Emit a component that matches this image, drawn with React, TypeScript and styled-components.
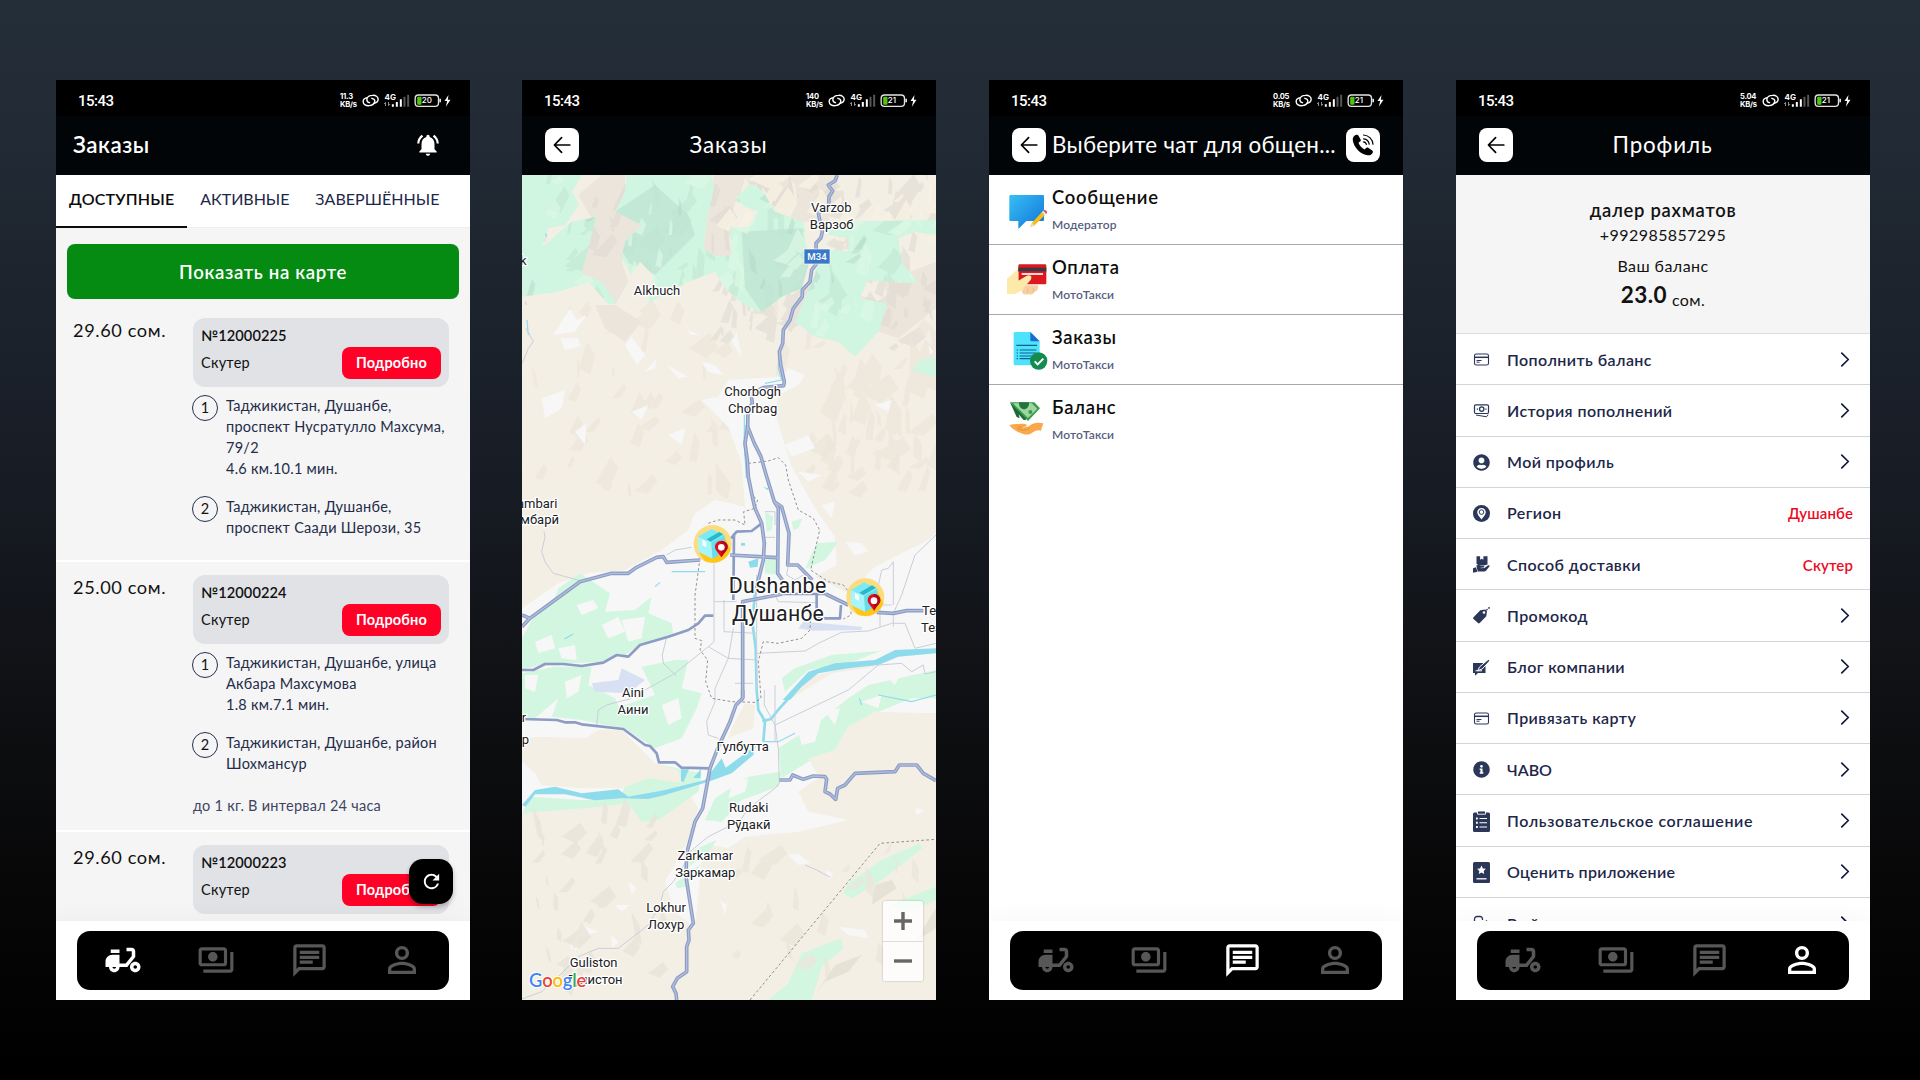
import React from 'react';
import styled, { createGlobalStyle, css } from 'styled-components';
import {
  MdDeliveryDining,
  MdOutlinePayments,
  MdOutlineChat,
  MdPersonOutline,
  MdNotificationsActive,
  MdRefresh,
} from 'react-icons/md';
import { FaUserCircle, FaInfoCircle } from 'react-icons/fa';

const Global = createGlobalStyle`
  * { box-sizing: border-box; }
  html, body { margin: 0; padding: 0; overflow: hidden; }
  body { font-family: Lato, "Noto Sans", sans-serif; color: #121212; }
`;

/* ---------- shell ---------- */

const Stage = styled.main`
  width: 1920px;
  height: 1080px;
  padding: 80px 0 0 56px;
  display: grid;
  grid-template-columns: 466px 467px 467px 414px;
  align-items: start;
  background: linear-gradient(180deg, #242e39 0%, #222b36 10%, #181d26 42%, #0f1013 65%, #050505 86%, #000 100%);
`;

const Phone = styled.section`
  width: 414px;
  height: 920px;
  display: flex;
  flex-direction: column;
  background: #fff;
  overflow: hidden;
`;

const StatusBar = styled.div`
  flex: none;
  height: 36px;
  padding: 5px 18px 0 22px;
  display: flex;
  align-items: center;
  background: #000;
  color: #fff;
`;

const Clock = styled.span`
  flex: 1;
  padding-top: 1px;
  font: 500 15px/18px Roboto, sans-serif;
  letter-spacing: -0.5px;
`;

const Speed = styled.span`
  display: flex;
  flex-direction: column;
  margin-right: 4px;
  width: 17px;
  font: 700 7.6px/7.3px Inter, sans-serif;
  letter-spacing: -0.25px;
  white-space: nowrap;
`;

const AppBar = styled.header`
  flex: none;
  position: relative;
  height: 59px;
  padding: 0 23px;
  display: flex;
  align-items: center;
  background: #020508;
  color: #fff;
`;

const HomeTitle = styled.h1`
  flex: 1;
  margin: 0 0 2px -6px;
  font-size: 22.4px;
  line-height: 28px;
  font-weight: 600;
  letter-spacing: 0.5px;
`;

const Bell = styled(MdNotificationsActive)`
  width: 26px;
  height: 26px;
  margin: 0 6px 1px 0;
`;

const ScreenTitle = styled.h1<{ $wide?: boolean }>`
  flex: 1;
  margin: 0 0 2px;
  font-size: 22.4px;
  line-height: 28px;
  font-weight: 400;
  white-space: nowrap;
  ${(p) =>
    p.$wide
      ? css`
          margin-left: 6px;
          letter-spacing: 0.25px;
        `
      : css`
          text-align: center;
          padding-right: 35px;
          letter-spacing: 0.85px;
        `}
`;

const SquareButton = styled.button`
  flex: none;
  width: 34px;
  height: 34px;
  margin-bottom: 1px;
  padding: 0;
  border: 0;
  border-radius: 8px;
  background: #fff;
  color: #000;
  display: flex;
  align-items: center;
  justify-content: center;
`;

const Body = styled.div<{ $tint?: string }>`
  flex: 1;
  min-height: 0;
  overflow: hidden;
  background: ${(p) => p.$tint ?? '#fff'};
`;

const NavDock = styled.footer`
  flex: none;
  position: relative;
  height: 79px;
  padding: 10px 21px 0;
  background: #fff;
  box-shadow: 0 -2px 26px rgba(0, 0, 0, 0.04);
`;

const NavPill = styled.nav`
  height: 58.5px;
  border-radius: 13px;
  background: #000;
  display: grid;
  grid-template-columns: repeat(4, 1fr);
  place-items: center;
`;

const NavItem = styled.span<{ $active: boolean; $size: number }>`
  display: flex;
  margin-right: 1px;
  color: ${(p) => (p.$active ? '#fff' : '#575757')};
  svg {
    width: ${(p) => p.$size}px;
    height: ${(p) => p.$size}px;
  }
`;

/* ---------- orders ---------- */

const Tabs = styled.div`
  flex: none;
  height: 53px;
  display: flex;
  background: #fff;
  border-bottom: 1px solid #efefef;
`;

const Tab = styled.span<{ $active?: boolean; $track: number }>`
  height: 53px;
  padding: 14px 13px 0;
  font-size: 16px;
  line-height: 20px;
  white-space: nowrap;
  letter-spacing: ${(p) => p.$track}px;
  color: ${(p) => (p.$active ? '#0c0c0c' : '#1d2749')};
  font-weight: ${(p) => (p.$active ? 600 : 400)};
  border-bottom: ${(p) => (p.$active ? '2px solid #0c0c0c' : '0')};
`;

const MapButton = styled.button`
  display: block;
  width: 392px;
  height: 55px;
  margin: 16px 11px 6px;
  border: 0;
  border-radius: 8px;
  background: #058a12;
  color: #fff;
  font: 600 18.6px/24px Lato, sans-serif;
  letter-spacing: 0.65px;
`;

const Order = styled.article`
  padding: 13px 21px 0 17px;
  display: grid;
  grid-template-columns: 120px 256px;
  border-bottom: 2px solid #fff;
`;

const Price = styled.span`
  margin-top: 1px;
  font-size: 18.2px;
  line-height: 22px;
  letter-spacing: 0.6px;
`;

const OrderCard = styled.div`
  height: 69px;
  padding: 9px 8px 8px;
  border-radius: 12px;
  background: #e1e2e6;
`;

const OrderNo = styled.div`
  font-size: 14.6px;
  line-height: 18px;
  font-weight: 600;
  letter-spacing: 0.1px;
`;

const OrderLine = styled.div`
  margin-top: 2px;
  display: flex;
  align-items: center;
  justify-content: space-between;
  font-size: 14.5px;
  letter-spacing: 0.25px;
`;

const Vehicle = styled.span`
  padding-bottom: 2px;
`;

const DetailsButton = styled.button`
  width: 99px;
  height: 32px;
  padding: 0 0 1px;
  border: 0;
  border-radius: 8px;
  background: #ff0026;
  color: #fff;
  font: 700 14.5px/18px Lato, sans-serif;
  letter-spacing: 0.2px;
`;

const Stops = styled.div`
  margin: 8px 0 22px -1px;
  display: flex;
  flex-direction: column;
  gap: 17px;
`;

const Stop = styled.div`
  display: flex;
  gap: 8px;
`;

const StopIndex = styled.span`
  flex: none;
  width: 26px;
  height: 26px;
  border: 1px solid #25304f;
  border-radius: 50%;
  font-size: 14.5px;
  line-height: 24px;
  text-align: center;
`;

const StopText = styled.span`
  font-size: 14.5px;
  line-height: 21px;
  letter-spacing: 0.26px;
  color: #242c49;
  white-space: pre;
`;

const Note = styled.div`
  margin: -1px 0 14px;
  font-size: 14.5px;
  line-height: 21px;
  letter-spacing: 0.26px;
  color: #3d4562;
`;

const Fab = styled.button`
  position: absolute;
  right: 17px;
  top: -62px;
  width: 44px;
  height: 45px;
  padding: 0;
  border: 0;
  border-radius: 14px;
  background: #000;
  color: #fff;
  display: flex;
  align-items: center;
  justify-content: center;
  box-shadow: 0 3px 5px rgba(0, 0, 0, 0.25);
  svg {
    width: 23px;
    height: 23px;
  }
`;

/* ---------- map ---------- */

const MapFrame = styled.div`
  position: relative;
  flex: 1;
  svg {
    display: block;
  }
`;

const ZoomControl = styled.div`
  position: absolute;
  right: 13px;
  bottom: 19px;
  width: 40px;
  height: 80px;
  border-radius: 2px;
  background: rgba(255, 255, 255, 0.8);
  box-shadow: 0 0 2px rgba(0, 0, 0, 0.3);
  display: flex;
  flex-direction: column;
  color: #666;
`;

const ZoomStep = styled.span`
  flex: 1;
  display: flex;
  align-items: center;
  justify-content: center;
  & + & {
    border-top: 1px solid #dcdcd8;
  }
`;

/* ---------- chats ---------- */

const ChatRow = styled.article`
  height: 70px;
  padding: 0 18px;
  display: flex;
  gap: 5px;
  border-bottom: 1px solid #a9a9a9;
  &:last-child {
    border-bottom: 0;
  }
`;

const ChatIcon = styled.span`
  width: 40px;
  padding-top: 17px;
  svg {
    display: block;
    overflow: visible;
  }
`;

const ChatTitle = styled.div`
  margin-top: 10px;
  font-size: 18.4px;
  line-height: 24px;
  font-weight: 600;
  letter-spacing: 0.7px;
  color: #0d0d0d;
`;

const ChatSub = styled.div`
  margin-top: 8px;
  font-size: 12px;
  line-height: 16px;
  font-weight: 600;
  letter-spacing: 0.1px;
  color: #566080;
`;

/* ---------- profile ---------- */

const ProfileHead = styled.div`
  height: 159px;
  padding-top: 23px;
  display: flex;
  flex-direction: column;
  align-items: center;
  background: #f5f5f5;
  border-bottom: 1px solid #dcdde2;
`;

const Name = styled.div`
  font-size: 18.4px;
  line-height: 24px;
  font-weight: 600;
  letter-spacing: 0.75px;
`;

const ProfileLine = styled.div<{ $top: number }>`
  margin-top: ${(p) => p.$top}px;
  font-size: 16px;
  line-height: 20px;
  letter-spacing: 0.45px;
`;

const Balance = styled.div`
  margin-top: 5px;
  display: flex;
  gap: 5px;
  font-size: 22.5px;
  line-height: 28px;
  font-weight: 700;
  letter-spacing: 0.4px;
  small {
    padding-top: 5px;
    font-size: 16px;
    font-weight: 400;
  }
`;

const MenuRow = styled.div`
  height: 51.27px;
  padding: 0 17px;
  display: flex;
  align-items: center;
  border-bottom: 1px solid #d3d4db;
  color: #1d2749;
`;

const MenuIcon = styled.span`
  width: 17px;
  margin-right: 17px;
  padding-top: 1px;
  display: flex;
  align-items: center;
  color: #2b3759;
`;

const MenuLabel = styled.span<{ $track: number }>`
  flex: 1;
  padding-top: 1px;
  font-size: 16px;
  line-height: 20px;
  font-weight: 600;
  letter-spacing: ${(p) => p.$track}px;
`;

const MenuValue = styled.span`
  padding-top: 1px;
  font-size: 15px;
  line-height: 20px;
  font-weight: 600;
  letter-spacing: 0.1px;
  color: #ec0a22;
`;

const Chevron = styled.svg`
  margin-right: 3px;
`;

/* ---------- shared pieces ---------- */

const StatusIcons = ({ level }: { level: string }) => (
  <svg width="91" height="15" viewBox="932 55 272 45" fill="none">
    <g stroke="#fff" strokeWidth="4.2" strokeLinecap="round">
      <path d="M951 69c-8 1-13 6-13 12 0 8 9 13 18 12 9 0 17-6 17-13 0-5-4-8-9-9" />
      <path d="M969 86c8-1 14-6 14-12 0-8-8-13-17-12-10 0-17 6-17 13 0 5 4 8 8 9" />
    </g>
    <text x="1002" y="75" fill="#fff" fontFamily="Inter, sans-serif" fontWeight="700" fontSize="24">4G</text>
    <path d="M1005 94V83l-4 5M1014 82v11l4-5" stroke="#8c8c8c" strokeWidth="3" />
    <path d="M1027 96v-7M1039 96V82M1051 96V74" stroke="#fff" strokeWidth="6" />
    <path d="M1062 96V66M1073 96V60" stroke="#565656" strokeWidth="6" />
    <rect x="1094" y="61" width="70" height="34" rx="10" stroke="#e4e4e4" strokeWidth="4" />
    <path d="M1169 72v11" stroke="#e4e4e4" strokeWidth="5" />
    <rect x="1100" y="66" width="13" height="24" rx="3" fill="#53c310" />
    <text x="1114" y="86" fill="#fff" fontFamily="Inter, sans-serif" fontWeight="500" fontSize="24">{level}</text>
    <path d="M1194 61l-12 18h8l-4 17 14-21h-8z" fill="#fff" />
  </svg>
);

const Status = ({ speed, level }: { speed: string; level: string }) => (
  <StatusBar>
    <Clock>15:43</Clock>
    <Speed>
      <span>{speed}</span>
      <span>KB/s</span>
    </Speed>
    <StatusIcons level={level} />
  </StatusBar>
);

const BackButton = () => (
  <SquareButton>
    <svg width="18" height="18" viewBox="0 0 18 18" fill="none" stroke="#000" strokeWidth="1.7" strokeLinecap="round" strokeLinejoin="round">
      <path d="M16.8 9H1.6M8.6 1.6L1.4 9l7.2 7.4" />
    </svg>
  </SquareButton>
);

const navIcons: [React.ReactElement, number][] = [
  [<MdDeliveryDining />, 42],
  [<MdOutlinePayments />, 38],
  [<MdOutlineChat />, 39],
  [<MdPersonOutline />, 42],
];

const Nav = ({ active, children }: { active: number; children?: React.ReactNode }) => (
  <NavDock>
    {children}
    <NavPill>
      {navIcons.map(([icon, size], i) => (
        <NavItem key={i} $active={i === active} $size={size}>
          {icon}
        </NavItem>
      ))}
    </NavPill>
  </NavDock>
);

/* ---------- screens ---------- */

type OrderData = { price: string; no: string; stops: string[]; note?: string };

const orders: OrderData[] = [
  {
    price: '29.60 сом.',
    no: '№12000225',
    stops: [
      'Таджикистан, Душанбе,\nпроспект Нусратулло Махсума,\n79/2\n4.6 км.10.1 мин.',
      'Таджикистан, Душанбе,\nпроспект Саади Шерози, 35',
    ],
  },
  {
    price: '25.00 сом.',
    no: '№12000224',
    stops: ['Таджикистан, Душанбе, улица\nАкбара Махсумова\n1.8 км.7.1 мин.', 'Таджикистан, Душанбе, район\nШохмансур'],
    note: 'до 1 кг. В интервал 24 часа',
  },
  { price: '29.60 сом.', no: '№12000223', stops: [] },
];

const OrdersScreen = () => (
  <Phone>
    <Status speed="11.3" level="20" />
    <AppBar>
      <HomeTitle>Заказы</HomeTitle>
      <Bell />
    </AppBar>
    <Tabs>
      <Tab $active $track={0.2}>ДОСТУПНЫЕ</Tab>
      <Tab $track={-0.05}>АКТИВНЫЕ</Tab>
      <Tab $track={0.05}>ЗАВЕРШЁННЫЕ</Tab>
    </Tabs>
    <Body $tint="#f5f5f5">
      <MapButton>Показать на карте</MapButton>
      {orders.map((o) => (
        <Order key={o.no}>
          <Price>{o.price}</Price>
          <div>
            <OrderCard>
              <OrderNo>{o.no}</OrderNo>
              <OrderLine>
                <Vehicle>Скутер</Vehicle>
                <DetailsButton>Подробно</DetailsButton>
              </OrderLine>
            </OrderCard>
            <Stops>
              {o.stops.map((s, i) => (
                <Stop key={s}>
                  <StopIndex>{i + 1}</StopIndex>
                  <StopText>{s}</StopText>
                </Stop>
              ))}
            </Stops>
            {o.note && <Note>{o.note}</Note>}
          </div>
        </Order>
      ))}
    </Body>
    <Nav active={0}>
      <Fab>
        <MdRefresh />
      </Fab>
    </Nav>
  </Phone>
);

/* Map drawing: artboard units are a third of a pixel. */

const seeded = (seed: number) => () => {
  seed = (seed * 1664525 + 1013904223) % 4294967296;
  return seed / 4294967296;
};

const facets = (seed: number, n: number, box: [number, number, number, number], size: number) => {
  const r = seeded(seed);
  const out: string[] = [];
  for (let i = 0; i < n; i++) {
    const x = box[0] + r() * box[2];
    const y = box[1] + r() * box[3];
    const a = r() * 1.3 + 0.5;
    const l = size * (0.5 + r());
    const w = l * (0.15 + r() * 0.35);
    const dx = Math.cos(a) * l;
    const dy = -Math.sin(a) * l;
    out.push(
      `M${x.toFixed(0)} ${y.toFixed(0)}l${dx.toFixed(0)} ${dy.toFixed(0)}l${(w * 0.7).toFixed(0)} ${(w * 1.1).toFixed(0)}l${(-dx * 0.55).toFixed(0)} ${(-dy * 0.75).toFixed(0)}z`,
    );
  }
  return out.join('');
};

const forest =
  'M21 300H200L172 350 192 390 150 450 100 460 80 515 21 512zM21 515L90 510 170 440 245 425 230 480 200 595 260 620 303 685 280 688 222 622 130 650 21 665zM335 300H590L597 340 577 430 565 520 600 545 650 540 645 460 700 455 730 410 690 395 660 370 710 325 745 350 780 410 865 440 880 570 860 640 800 665 740 712 690 690 635 645 600 590 520 620 400 685 415 600 375 560 350 600 320 550 330 500 380 450 300 410 330 350zM940 440L1263 435V480L1200 470 1150 490 1160 560 1210 625 1130 622 1060 615 1033 670 1117 685 1090 770 1020 845 970 800 900 785 840 740 865 680 900 600 910 520 1000 530 1000 490 940 480zM1190 885L1220 852 1263 850V905z';

const highways = [
  'M967 300L960 318 940 330 953 348 942 365 941 388 910 415 922 470 918 488 903 505 905 565 890 585 885 620 862 645 862 665 835 700 825 735 805 765 803 805 793 830 797 870 808 920 806 932 745 938 708 955 712 985 699 1005 698 1055 690 1105 697 1155 700 1205 712 1265 720 1300 740 1345 748 1405 745 1455 730 1515 720 1555',
  'M698 1055L718 1105 738 1145 752 1195 778 1280 790 1300 788 1495 802 1515',
  'M778 1280L800 1295 822 1375 818 1470 848 1470 892 1515',
  'M21 1620L45 1630 195 1520 290 1495 340 1495 365 1477 425 1447 445 1445 455 1462 555 1455M21 1655L45 1630',
  'M645 1440L785 1448M932 1557L1000 1590M1085 1612L1135 1615 1175 1607 1225 1607',
  'M683 1870V1580L770 1563 802 1557',
  'M683 1845V1870L663 1890 645 1940 610 2015 585 2080 563 2200 540 2240 515 2335 513 2405 535 2545 520 2565 522 2595 515 2615 515 2690 487 2710 473 2735 483 2755 485 2775',
  'M793 2115L825 2115 833 2100 865 2113 895 2103 930 2105 935 2113 930 2150 945 2157 962 2173 968 2140 990 2130 1020 2095 1140 2090 1153 2070 1205 2070 1225 2095 1263 2117',
];

const arterials = [
  'M648 1390L665 1370 710 1368 740 1345M657 1375L655 1575',
  'M905 1555V1630H975L978 1590M802 1557H932',
  'M21 1785L55 1785 90 1767 145 1767 200 1773 265 1763 305 1740 340 1745 375 1710 460 1685 520 1665 550 1645 570 1622 595 1622',
  'M21 1932L125 1935 150 1942 180 1942 200 1948 325 1962 390 2010 405 2013 425 2035 432 2062 480 2062 500 2078 585 2080',
];

const lanes =
  'M597 1465V1700L580 1715 480 1795 390 1845M455 1685L442 1740 445 1765 485 1803M580 1715L640 1750 725 1755M597 1580H665M627 1575V1670L725 1675M725 1500V1845M655 1660L640 1750 600 1840V1880L575 1940 580 1980 610 1990M725 1735L870 1728 910 1705 980 1672 1060 1668 1130 1645 1170 1645 1200 1720 1263 1705M1135 1610V1655M1095 1655V1590H1130M1135 1615L1160 1560 1200 1440 1263 1380M1085 1555L1100 1485 1120 1480 1135 1460V1590M820 1470L815 1500 840 1515 865 1500M780 1350V1310H750M750 1387H780M455 1440L480 1425 530 1417M780 1560L790 1580 905 1583M748 1845V1890L780 1950 1000 1845 1090 1770 1160 1765 1190 1790 1225 1770 1230 1797 1263 1790M780 1950L790 2020 793 2125 780 2140 700 2200 680 2230 630 2260 580 2285 525 2330M780 1830V2000M245 1950L250 1905 275 1890 350 1870M513 2360L475 2420 445 2450 435 2490 400 2550 310 2620H250L190 2645 130 2705 80 2750 21 2772M87 1370L90 1385 80 1430 90 1460 115 1495 195 1517M30 680L35 690M33 760L55 800 40 820 22 865M660 1825H715M870 2370L905 2385 945 2407';

const labels: [number, number, string][] = [
  [949, 411, 'Varzob'],
  [950, 461, 'Варзоб'],
  [426, 659, 'Alkhuch'],
  [713, 963, 'Chorbogh'],
  [713, 1014, 'Chorbag'],
  [354, 1865, 'Aini'],
  [354, 1916, 'Аини'],
  [683, 2028, 'Гулбутта'],
  [701, 2210, 'Rudaki'],
  [701, 2261, 'Рӯдакӣ'],
  [571, 2355, 'Zarkamar'],
  [571, 2406, 'Заркамар'],
  [453, 2511, 'Lokhur'],
  [453, 2562, 'Лохур'],
  [236, 2677, 'Guliston'],
];

const Marker = ({ x, y }: { x: number; y: number }) => (
  <g transform={`translate(${x} ${y})`}>
    <circle r="57" fill="#fbdd80" />
    <path d="M-42 24L-24 51A57 57 0 0 0 54 18L36 -20z" fill="#ffc51b" />
    <path d="M-44 -22L-4 -5 0 44 -42 24z" fill="#a6f5fb" />
    <path d="M-4 -5L36 -26 36 22 0 44z" fill="#62dff1" />
    <path d="M-44 -22L-4 -45 36 -26 -4 -5z" fill="#7beaf6" />
    <path d="M-18 -14L20 -36 32 -29 -6 -7z" fill="#27b9c9" />
    <path d="M-31 -13L-19 -7V10L-31 4z" fill="#f3feff" />
    <path d="M26 40C14 22 7 18 7 9a19 19 0 0 1 38 0c0 9-7 13-19 31z" fill="#e30b1c" />
    <path d="M26 40C38 22 45 18 45 9A19 19 0 0 0 26 -10z" fill="#b40818" />
    <circle cx="26" cy="10" r="10" fill="#fff" />
  </g>
);

const CityMap = () => (
  <svg width="414" height="825" viewBox="21 300 1242 2475">
    <defs>
      <clipPath id="forest"><path d={forest} /></clipPath>
    </defs>
    <rect x="21" y="300" width="1242" height="2475" fill="#f4efe5" />
    <path d="M190 360L260 300 330 300 330 360 300 410 380 450 330 500 320 560 340 620 300 690 250 620 200 595 235 440zM597 300H967L940 440 865 440 780 410 660 380 640 460 650 540 600 545 565 520zM21 450L80 460 95 500 21 515zM240 690L300 690 380 740 330 800 270 760zM1030 660L1117 685 1110 620 1263 560V700L1150 790 1090 770z" fill="#ebe5dc" />
    <g fill="#ded8d0" opacity=".5">
      <path d={facets(7, 60, [200, 310, 1060, 260], 60)} />
      <path d={facets(19, 34, [560, 640, 380, 160], 50)} />
      <path d={facets(23, 26, [1020, 560, 240, 260], 55)} />
    </g>
    <path d={facets(31, 38, [600, 300, 663, 200], 60)} fill="#f7f1e3" opacity=".8" />
    <path d={facets(41, 70, [30, 700, 1230, 560], 60)} fill="#ebe6da" opacity=".7" />
    <path d={facets(43, 46, [900, 880, 360, 340], 75)} fill="#ebe6da" opacity=".7" />

    <path d={forest} fill="#d0f5e0" />
    <g clipPath="url(#forest)">
      <path d="M300 410L420 330 520 420 540 480 420 600 330 560zM680 470L860 460 900 640 740 712 690 640z" fill="#c4e8d6" />
      <path d={facets(3, 70, [20, 310, 1243, 500], 65)} fill="#bfe3d1" opacity=".55" />
      <path d={facets(11, 80, [20, 320, 1243, 520], 60)} fill="#dcf9e4" opacity=".7" />
      <path d={facets(13, 26, [20, 320, 1243, 460], 45)} fill="#a9d2bf" opacity=".35" />
    </g>

    <path d="M640 915L800 905 820 880 870 900 850 930 790 960 780 1010 800 1080 830 1175 900 1300 960 1385 965 1470 900 1505 1000 1555 1080 1475 1240 1395 1263 1375V1915L1080 1915 1000 1955 960 2025 930 2095 850 2150 880 2210 1000 2235 850 2270 690 2285 640 2320 590 2310 560 2360 540 2560 480 2510 450 2420 515 2305 550 2200 510 2135 340 2175 200 2195 21 2215V1600L130 1525 220 1495 330 1485 440 1425 520 1365 540 1315 600 1275 690 1295 680 1165 640 1055 560 975 610 965z" fill="#f7f7f7" />
    <path d="M115 780L165 700 185 735 215 720 180 770zM135 790L190 790 195 815 150 825zM330 810L350 785 390 840 365 870zM500 720L520 765 555 780 525 780zM390 890L425 850 420 880zM455 870L520 905 490 910zM650 800L665 770 680 845zM560 860L600 870 625 900 580 890zM80 970L150 945 140 1000 90 1030zM180 1070L215 1045 210 1110zM1240 810L1255 830 1245 840zM1080 990L1130 975 1120 1010zM350 1010L400 990 380 1035zM460 1080L510 1060 500 1110zM810 1110L880 1080 900 1120 830 1145zM850 1190L920 1200 880 1220zM990 1400L1040 1405 1060 1430 1020 1440zM920 1290L960 1280 950 1330zM165 2620L200 2550 250 2570 190 2590 185 2625zM340 2420L365 2440 350 2460zM300 2490L345 2490 320 2510zM615 2475L635 2490 630 2520zM820 2340L850 2335 885 2365 850 2370zM970 2555L1050 2565 1060 2590 1000 2580zM1200 2200L1230 2205 1205 2220zM930 2385L955 2395 940 2415zM290 2580L310 2600 290 2620z" fill="#f7f7f7" />

    <path d="M130 1540L195 1495 225 1515 285 1555 270 1610 360 1605 410 1565 400 1615 470 1645 475 1685 380 1705 330 1740 300 1735 270 1760 160 1765 90 1765 21 1785V1690L50 1635 120 1565zM21 1795L120 1775 230 1775 220 1830 300 1870 340 1960 270 1950 200 1935 110 1925 130 1870 60 1930 21 1925zM380 1775L480 1755 520 1755 500 1840 560 1855 545 1900 500 1990 420 2020 330 1960 300 1900 420 1860zM1263 1785V1870L1190 1870 1080 1915 1000 1955 960 2025 880 2060 800 2110 790 2020 900 1950 1000 1870 1060 1830zM800 1810L840 1780 950 1740 1100 1727 1000 1765 880 1785 810 1850zM750 1310L775 1325 770 1365 755 1370zM830 1340L862 1330 850 1360 835 1365zM905 1405L970 1400 930 1455 870 1482zM750 1455L792 1445V1500L750 1495zM330 2120L380 2090 440 2070 560 2095 550 2150 430 2235 380 2240 340 2185 210 2200 21 2215 50 2165 200 2175 320 2170zM570 2235L600 2170 700 2105 800 2090 790 2135 680 2175 620 2240zM985 2455L1000 2425 1100 2355 1215 2305 1222 2320 1100 2415 1010 2470zM860 2635L980 2590 985 2620 920 2675 890 2775 760 2775 820 2725zM1120 2490L1263 2435V2475L1180 2510zM535 2325L605 2295 580 2335 520 2375zM480 2425L560 2365 510 2435 487 2440z" fill="#d3f6e0" />
    <path d="M60 1700L110 1680 120 1720 70 1735zM185 1590L235 1575 250 1600 200 1620zM260 1650L310 1625 330 1670 280 1690zM130 1720L180 1710 185 1755 140 1750zM320 1635L390 1625 380 1690 340 1700zM30 1800L70 1800 60 1850 30 1840zM150 1820L200 1800 190 1850 155 1870zM440 1890L490 1870 500 1930 460 1950zM850 1970L920 1930 900 2000 860 2010zM1040 1880L1100 1860 1090 1900zM650 2130L700 2110 690 2150 640 2170zM930 1910L975 1900 960 1950zM1110 1800L1160 1790 1140 1830z" fill="#f7f7f7" />
    <path d="M21 1995L60 1985 230 1990 130 2040 60 2095 21 2060zM250 1965L320 1965 420 2065 490 2085 500 2125 400 2110 320 2140 200 2140 80 2130 60 2095 130 2040zM650 1960L690 1885 720 1890 715 1960 640 1990zM880 2050L960 2025 1000 1955 1080 1910 1263 1915V2120L1000 2200 930 2140zM905 1800L1090 1755 1080 1775 950 1795 830 1870 860 1830z" fill="#f4efe5" />
    <path d={facets(53, 34, [30, 2240, 430, 520], 62)} fill="#e9e4d8" opacity=".8" />
    <path d={facets(59, 22, [640, 2330, 600, 420], 55)} fill="#ebe6da" opacity=".8" />
    <path d="M900 2760L960 2670 1040 2640 1000 2690 930 2720zM1200 2600L1263 2500V2560zM1080 2430L1130 2415 1145 2440 1070 2490z" fill="#e3ded2" opacity=".8" />

    <path d="M850 1660L865 1640 1040 1655V1665L890 1667zM230 1825L310 1815 320 1780 390 1815 340 1855 240 1850z" fill="#d8e0f4" />
    <g fill="#8edbec">
      <path d="M803 1875L880 1790 960 1765 1080 1755 1140 1725 1263 1720V1735L1150 1745 1090 1770 1000 1780 910 1795 860 1835 825 1875zM21 2190L60 2145 120 2135 200 2155 310 2143 340 2165 450 2145 570 2115 620 2050 632 2078 722 2012 715 2040 650 2095 580 2120 450 2160 400 2172 320 2170 240 2176 150 2158 60 2158 32 2195zM498 2083L522 2083 505 2122 498 2118zM535 2108L558 2082 556 2110zM700 1460L730 1450 728 1475 705 1478zM678 1404H690V1412H678zM745 1236L760 1240 758 1246zM90 475L96 478 94 492z" />
    </g>
    <g stroke="#8edbec" fill="none">
      <path d="M720 1555L712 1640 722 1720 725 1845 730 1905 750 1938 745 2000" strokeWidth="8" />
      <path d="M836 1853L785 1910 768 1932 742 1938" strokeWidth="8" />
      <path d="M792 840L790 880 800 915 750 925M688 1020V1105L694 1210M745 2000L790 2000 840 1975M1090 1860L1190 1880 1263 1860M36 735L40 780M420 1535L435 1522M470 1490L570 1490M148 1692L175 1677M1033 1870L1040 1890" strokeWidth="3.5" />
      <path d="M690 1050L688 1110 697 1200 716 1290 740 1350" strokeWidth="5" />
    </g>

    <path d={lanes} fill="none" stroke="#c9cfda" strokeWidth="3" />
    <g fill="none" stroke="#7c7c7c" strokeWidth="2.5" strokeDasharray="8 7">
      <path d="M700 1165L760 1158 790 1148 812 1170 820 1215 850 1305 895 1330 914 1365 887 1485 940 1520 985 1530 1008 1560 1008 1620 985 1632M555 1450L540 1560V1690L560 1697 555 1725 578 1755 572 1820 590 1870 650 1880 720 1882 738 1870 730 1760 745 1700 790 1705 860 1690 885 1665 887 1620M580 1345L610 1335 660 1335 690 1350 686 1310 720 1300 728 1275 700 1250M705 2775L1095 2305 1263 2293" />
    </g>
    <g fill="none" stroke="#8c9cc4" strokeLinejoin="round">
      {arterials.map((d) => <path key={d} d={d} strokeWidth="8" />)}
      {highways.map((d) => <path key={d} d={d} strokeWidth="11" />)}
    </g>
    <g fill="none" stroke="#b1bedb" strokeWidth="4" strokeLinejoin="round">
      {highways.map((d) => <path key={d} d={d} />)}
    </g>

    <rect x="867" y="522" width="78" height="45" fill="#3a78c8" stroke="#fff" strokeWidth="2" />
    <text x="906" y="555" fill="#fff" fontFamily="Roboto, sans-serif" fontWeight="500" fontSize="29" textAnchor="middle">M34</text>

    <Marker x={593} y={1407} />
    <Marker x={1051} y={1567} />

    <g fontFamily="Roboto, sans-serif" fill="#202124" stroke="#fff" strokeWidth="8" strokeLinejoin="round" paintOrder="stroke" fontSize="39">
      <g textAnchor="middle">
        {labels.map(([x, y, t]) => <text key={t} x={x} y={y}>{t}</text>)}
        <text x="788" y="1554" fontSize="64" letterSpacing="1">Dushanbe</text>
        <text x="789" y="1639" fontSize="64" letterSpacing="0.6">Душанбе</text>
      </g>
      <text x="158" y="2728">Гулистон</text>
      <text x="15" y="571">k</text>
      <text x="127" y="1298" textAnchor="end">ambari</text>
      <text x="132" y="1348" textAnchor="end">мбарӣ</text>
      <text x="1221" y="1620">Tez</text>
      <text x="1218" y="1671">Тез</text>
      <text x="20" y="2008">р</text>
      <text x="20" y="1940">r</text>
    </g>
    <text x="42" y="2736" fontFamily="Lato, sans-serif" fontWeight="600" fontSize="55" textLength="172" stroke="#fff" strokeWidth="6" paintOrder="stroke">
      <tspan fill="#4285f4">G</tspan>
      <tspan fill="#ea4335">o</tspan>
      <tspan fill="#fbbc05">o</tspan>
      <tspan fill="#4285f4">g</tspan>
      <tspan fill="#34a853">l</tspan>
      <tspan fill="#ea4335">e</tspan>
    </text>
  </svg>
);

const MapScreen = () => (
  <Phone>
    <Status speed="140" level="21" />
    <AppBar>
      <BackButton />
      <ScreenTitle>Заказы</ScreenTitle>
    </AppBar>
    <MapFrame>
      <CityMap />
      <ZoomControl>
        <ZoomStep>
          <svg width="18" height="18" viewBox="0 0 18 18"><path d="M0 9h18M9 0v18" stroke="currentColor" strokeWidth="3.4" /></svg>
        </ZoomStep>
        <ZoomStep>
          <svg width="18" height="18" viewBox="0 0 18 18"><path d="M0 9h18" stroke="currentColor" strokeWidth="3.4" /></svg>
        </ZoomStep>
      </ZoomControl>
    </MapFrame>
  </Phone>
);

const MessageArt = () => (
  <svg width="40" height="40" viewBox="0 0 120 120">
    <defs>
      <linearGradient id="bubble" x1="0" y1="0" x2="1" y2="1">
        <stop offset="0" stopColor="#36c0f4" />
        <stop offset="1" stopColor="#1273d8" />
      </linearGradient>
    </defs>
    <path d="M7 12a3 3 0 0 1 3-3h98a3 3 0 0 1 3 3v72a3 3 0 0 1-3 3H58L34 111V87H10a3 3 0 0 1-3-3z" fill="url(#bubble)" />
    <path d="M75 92L105 60l9 9-31 31-13 5z" fill="#f5bd16" />
    <path d="M75 92l8 8-13 5z" fill="#e8d9b4" />
    <path d="M104 61l6-6 9 9-6 6z" fill="#dfe3e6" />
    <path d="M110 55c4-4 12 3 10 8l-2 2-9-9z" fill="#e0475f" />
  </svg>
);

const PaymentArt = () => (
  <svg width="40" height="40" viewBox="0 0 120 120">
    <path d="M45 70h48c1 14-3 18-11 20-4 9-14 9-18 5-6 5-17 3-19-5z" fill="#f7cfa0" />
    <path d="M62 80v14M79 78v13" stroke="#e3b27e" strokeWidth="2" />
    <path d="M0 50L34 20v60h20L26 94c-5 3-12 2-26 2z" fill="#fde9a9" />
    <rect x="34" y="7" width="84" height="60" rx="4" fill="#dc1a1e" />
    <path d="M34 17h84v11H34z" fill="#3c3846" />
    <path d="M44 36h64" stroke="#fff" strokeWidth="5" />
    <path d="M0 52L34 30v26l24-14c8-5 16-2 15 6-1 8-10 14-18 24-10 12-22 22-32 23-8 1-14 1-23 1z" fill="#fde9a9" />
  </svg>
);

const OrdersArt = () => (
  <svg width="40" height="40" viewBox="0 0 120 120">
    <path d="M20 4a4 4 0 0 1 4-4h46l28 28v68a4 4 0 0 1-4 4H24a4 4 0 0 1-4-4z" fill="#4fe3fb" />
    <path d="M70 0l28 28H74a4 4 0 0 1-4-4z" fill="#1a6bd3" />
    <path d="M28 40h62M38 54h50M38 63h50M38 72h42M38 80h34" stroke="#0d5f94" strokeWidth="3.6" />
    <path d="M29 54h4M29 63h4M29 72h4M29 80h4" stroke="#0d5f94" strokeWidth="3.6" />
    <circle cx="95" cy="87" r="26" fill="#138c50" />
    <path d="M83 88l9 9 17-17" stroke="#fff" strokeWidth="6" fill="none" />
  </svg>
);

const BalanceArt = () => (
  <svg width="40" height="40" viewBox="0 0 120 120">
    <path d="M9 1l20 44 9 4-3-12 14 16 6 2 5-10z" fill="#1b6a34" />
    <path d="M9 1h73l17 18-36 38z" fill="#3c9a4f" />
    <path d="M18 4h56l17 16-28 28z" fill="#9ed6a0" />
    <path d="M36 1h30c2 28-32 28-30 0z" fill="#23743a" />
    <circle cx="70" cy="30" r="6" fill="#3c9a4f" />
    <path d="M7 70c8-5 20-3 28-4 10-2 22-1 24 3 2 5-8 5-14 6 12 2 20-1 29-8 8-5 22-6 35-3-2 8-5 13-7 22-10-4-18 0-28 7-8 6-18 6-27 2C36 91 22 88 7 70z" fill="#f9a94b" />
    <path d="M30 78c12 8 26 8 38 0M45 75h-12" stroke="#e08a2c" strokeWidth="2.5" fill="none" />
  </svg>
);

const chats: [React.ReactElement, string, string][] = [
  [<MessageArt />, 'Сообщение', 'Модератор'],
  [<PaymentArt />, 'Оплата', 'МотоТакси'],
  [<OrdersArt />, 'Заказы', 'МотоТакси'],
  [<BalanceArt />, 'Баланс', 'МотоТакси'],
];

const ChatsScreen = () => (
  <Phone>
    <Status speed="0.05" level="21" />
    <AppBar>
      <BackButton />
      <ScreenTitle $wide>Выберите чат для общен...</ScreenTitle>
      <SquareButton>
        <svg width="22" height="22" viewBox="0 0 22 22" fill="none">
          <path d="M4.2.8C2 1.5.4 3.5.8 6.3c1 7 7.4 14 14.6 15 2.4.2 4.6-.8 5.4-2.9.3-.8.1-1.5-.6-2l-4-2.600c-.8-.5-1.600-.4-2.200.3l-1.300 1.400c-2.900-1.400-5-3.800-6.200-6.800l1.600-1.200c.7-.6.9-1.300.5-2.100L6.400 1.600C5.900.8 5.100.5 4.200.8z" fill="#000" />
          <path d="M11.6 4.8c3 .3 5.200 2.400 5.600 5.400M11.600 1c5.200.4 9 4.200 9.400 9.200" stroke="#000" strokeWidth="1.2" strokeLinecap="round" />
          <path d="M11.500 7.800c1.600.2 2.700 1.200 2.900 2.700" stroke="#000" strokeWidth="1.2" strokeLinecap="round" />
        </svg>
      </SquareButton>
    </AppBar>
    <Body>
      {chats.map(([art, title, sub]) => (
        <ChatRow key={title}>
          <ChatIcon>{art}</ChatIcon>
          <div>
            <ChatTitle>{title}</ChatTitle>
            <ChatSub>{sub}</ChatSub>
          </div>
        </ChatRow>
      ))}
    </Body>
    <Nav active={2} />
  </Phone>
);

const CardIcon = () => (
  <svg width="17" height="17" viewBox="0 0 17 17" fill="none" stroke="currentColor">
    <rect x="1.5" y="3" width="14" height="11" rx="1.8" strokeWidth="1.1" />
    <path d="M1.5 6.3h14" strokeWidth="1.5" />
    <path d="M3.5 9.5h5M3.5 11.2h3" strokeWidth="1" />
  </svg>
);

const CashIcon = () => (
  <svg width="17" height="17" viewBox="0 0 17 17" fill="none" stroke="currentColor">
    <rect x="1.5" y="2.8" width="14" height="8.7" rx="1.2" strokeWidth="1.2" />
    <circle cx="8.700" cy="7.1" r="2.2" strokeWidth="1.3" />
    <path d="M3.8 7.1h1.2M12.3 7.1h1.2" strokeWidth="1.3" />
    <path d="M3 13l10.5 1.8 1.6-2.3" strokeWidth="1" />
  </svg>
);

const PlaceIcon = () => (
  <svg width="17" height="17" viewBox="0 0 17 17">
    <circle cx="8.5" cy="8.5" r="8.5" fill="currentColor" />
    <path d="M8.5 14.5C6 11.3 4.2 9.5 4.2 7.3a4.3 4.3 0 0 1 8.600 0c0 2.200-1.800 4-4.300 7.200z" fill="#fff" />
    <circle cx="8.5" cy="7.1" r="2.3" fill="#fff" stroke="currentColor" strokeWidth="1" />
  </svg>
);

const DeliveryIcon = () => (
  <svg width="17" height="17" viewBox="0 0 17 17" fill="currentColor">
    <path d="M3.5.3h3.6v3.5l1.700-1 1.600 1V.3h4.100v8.200L11 9.600H6.500L3.500 8z" />
    <path d="M3.300 9.600l2.300-.9 2.700 1.300h2.500c.8.3.6 1.300-.2 1.400l-3 .3v.6l3.800-.2 3.400-2.700c1-.6 2.300.2 1.600 1.200l-3.200 3.900c-.6.7-1.300 1-2.200 1H4.800z" />
    <path d="M0 12.200l3-1 1.400 4.500-4.400 1z" />
  </svg>
);

const TagIcon = () => (
  <svg width="17" height="17" viewBox="0 0 17 17">
    <path d="M.5 10.3L7.3 3.2l5-.7 1.700 1.500-.7 5.200-6.600 6.900c-.5.5-1.200.5-1.700 0L.5 12c-.5-.5-.5-1.200 0-1.700z" fill="currentColor" />
    <circle cx="11" cy="5.5" r="1.3" fill="#fff" />
    <circle cx="14" cy="2.6" r=".8" fill="currentColor" />
    <circle cx="16" cy=".9" r=".9" fill="currentColor" />
  </svg>
);

const BlogIcon = () => (
  <svg width="17" height="17" viewBox="0 0 17 17">
    <path d="M0 4h12.5v10H5l-3 2.8V14H0z" fill="currentColor" />
    <path d="M15.3.4l1.5 1.4-7.6 8.2-4.5 1.6 2-3.8z" fill="currentColor" stroke="#fff" strokeWidth="1" />
    <path d="M2.5 11.8h6.5" stroke="#fff" strokeWidth="1" />
  </svg>
);

const ClipboardIcon = () => (
  <svg width="17" height="21" viewBox="0 0 17 21">
    <rect y="1.5" width="17" height="19.5" rx="1.5" fill="currentColor" />
    <path d="M4.5 0h8v3.2h-8z" fill="currentColor" stroke="#fff" strokeWidth=".9" />
    <path d="M3 7.5h1.8M3 11.7h1.8M3 16h1.8" stroke="#fff" strokeWidth="2" />
    <path d="M6.5 7.5h7.500M6.500 11.7h7.500M6.500 16h7.500" stroke="#fff" strokeWidth="1.1" />
  </svg>
);

const RateIcon = () => (
  <svg width="17" height="21" viewBox="0 0 17 21">
    <rect width="17" height="21" rx="1.5" fill="currentColor" />
    <path d="M8.5 3.600l1.400 2.800 3 .4-2.200 2.200.5 3-2.700-1.400L5.800 12l.5-3-2.200-2.200 3-.4z" fill="#fff" />
    <path d="M3.5 16.800h10" stroke="#fff" strokeWidth="1.3" />
  </svg>
);

const ExitIcon = () => (
  <svg width="17" height="17" viewBox="0 0 17 17" fill="none" stroke="currentColor" strokeWidth="1.3">
    <path d="M9.5 5V4A2.5 2.5 0 0 0 7 1.5H4A2.5 2.5 0 0 0 1.5 4v9A2.5 2.5 0 0 0 4 15.5h3A2.5 2.5 0 0 0 9.5 13v-1M6 8.5h10M13 5.5l3 3-3 3" />
  </svg>
);

type MenuItem = { icon: React.ReactElement; label: string; track?: number; value?: string };

const menu: MenuItem[] = [
  { icon: <CardIcon />, label: 'Пополнить баланс' },
  { icon: <CashIcon />, label: 'История пополнений' },
  { icon: <FaUserCircle size={17} />, label: 'Мой профиль' },
  { icon: <PlaceIcon />, label: 'Регион', value: 'Душанбе' },
  { icon: <DeliveryIcon />, label: 'Способ доставки', value: 'Скутер' },
  { icon: <TagIcon />, label: 'Промокод' },
  { icon: <BlogIcon />, label: 'Блог компании' },
  { icon: <CardIcon />, label: 'Привязать карту' },
  { icon: <FaInfoCircle size={17} />, label: 'ЧАВО', track: 0 },
  { icon: <ClipboardIcon />, label: 'Пользовательское соглашение', track: 0.62 },
  { icon: <RateIcon />, label: 'Оценить приложение', track: 0.32 },
  { icon: <ExitIcon />, label: 'Выйти' },
];

const ProfileScreen = () => (
  <Phone>
    <Status speed="5.04" level="21" />
    <AppBar>
      <BackButton />
      <ScreenTitle>Профиль</ScreenTitle>
    </AppBar>
    <Body>
      <ProfileHead>
        <Name>далер рахматов</Name>
        <ProfileLine $top={3}>+992985857295</ProfileLine>
        <ProfileLine $top={11}>Ваш баланс</ProfileLine>
        <Balance>
          23.0 <small>сом.</small>
        </Balance>
      </ProfileHead>
      {menu.map((m) => (
        <MenuRow key={m.label}>
          <MenuIcon>{m.icon}</MenuIcon>
          <MenuLabel $track={m.track ?? 0.43}>{m.label}</MenuLabel>
          {m.value ? (
            <MenuValue>{m.value}</MenuValue>
          ) : (
            <Chevron width="10" height="15" viewBox="0 0 10 15" fill="none" stroke="#111a3a" strokeWidth="1.7" strokeLinecap="round" strokeLinejoin="round">
              <path d="M1.8 1.2L8.3 7.5 1.8 13.8" />
            </Chevron>
          )}
        </MenuRow>
      ))}
    </Body>
    <Nav active={3} />
  </Phone>
);

export default function App() {
  return (
    <>
      <Global />
      <Stage>
        <OrdersScreen />
        <MapScreen />
        <ChatsScreen />
        <ProfileScreen />
      </Stage>
    </>
  );
}
